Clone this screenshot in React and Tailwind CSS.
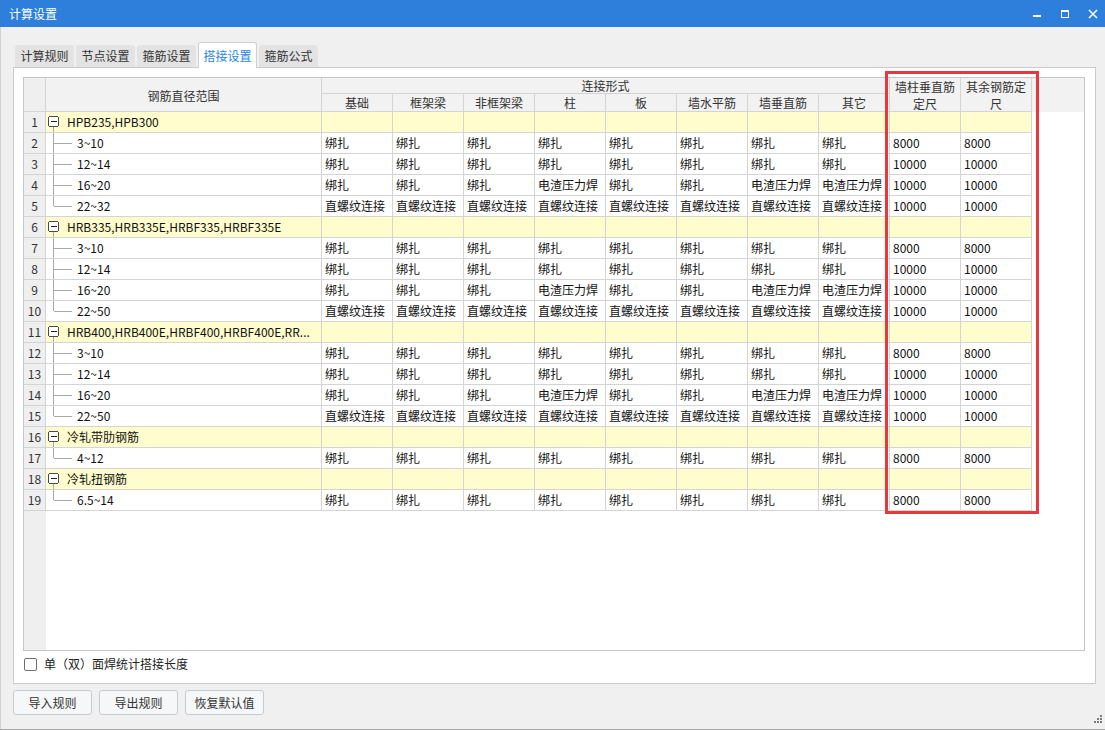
import React from 'react';

const B = '绑扎';
const Z = '直螺纹连接';
const D = '电渣压力焊';

const plain = (len) => [B, B, B, B, B, B, B, B, len, len];
const weld = [B, B, B, D, B, B, D, D, '10000', '10000'];
const screw = [Z, Z, Z, Z, Z, Z, Z, Z, '10000', '10000'];

const rows = [
  { g: 'HPB235,HPB300' },
  { l: '3~10', c: plain('8000') },
  { l: '12~14', c: plain('10000') },
  { l: '16~20', c: weld },
  { l: '22~32', c: screw, last: true },
  { g: 'HRB335,HRB335E,HRBF335,HRBF335E' },
  { l: '3~10', c: plain('8000') },
  { l: '12~14', c: plain('10000') },
  { l: '16~20', c: weld },
  { l: '22~50', c: screw, last: true },
  { g: 'HRB400,HRB400E,HRBF400,HRBF400E,RR...' },
  { l: '3~10', c: plain('8000') },
  { l: '12~14', c: plain('10000') },
  { l: '16~20', c: weld },
  { l: '22~50', c: screw, last: true },
  { g: '冷轧带肋钢筋' },
  { l: '4~12', c: plain('8000'), last: true },
  { g: '冷轧扭钢筋' },
  { l: '6.5~14', c: plain('8000'), last: true },
];

const subCols = ['基础', '框架梁', '非框架梁', '柱', '板', '墙水平筋', '墙垂直筋', '其它'];

const GroupMark = () => (
  <svg width="21" height="21" className="shrink-0 overflow-visible" shapeRendering="crispEdges">
    <line x1="7.5" y1="15" x2="7.5" y2="21" stroke="#a9a9a9" />
    <rect x="2.5" y="4.5" width="10" height="10" rx="2" fill="#fff" stroke="#4a4a4a" />
    <line x1="5" y1="9.5" x2="11" y2="9.5" stroke="#222" />
  </svg>
);

const ChildMark = ({ last }) => (
  <svg width="31" height="21" className="shrink-0 overflow-visible" shapeRendering="crispEdges">
    <line x1="7.5" y1="-1" x2="7.5" y2={last ? 10 : 21} stroke="#a9a9a9" />
    <line x1="7.5" y1="10.5" x2="26" y2="10.5" stroke="#a9a9a9" />
  </svg>
);

function Grid() {
  return (
    <div className="w-[1062px] h-[574px] border border-[#c3c6cb] flex flex-col bg-white">
      {/* header */}
      <div className="flex h-[34px] shrink-0 bg-[#f2f2f2] text-[#333]">
        <div className="w-[22px] border-r border-b border-[#d4d4d4] bg-[#efefef]" />
        <div className="w-[276px] border-r border-b border-[#d4d4d4] flex items-center justify-center pt-[2px]">
          钢筋直径范围
        </div>
        <div className="w-[568px] flex flex-col">
          <div className="h-[16px] border-r border-b border-[#d4d4d4] flex items-center justify-center leading-[15px]">
            连接形式
          </div>
          <div className="flex h-[18px]">
            {subCols.map((c) => (
              <div key={c} className="w-[71px] border-r border-b border-[#d4d4d4] flex items-center justify-center leading-[17px]">
                {c}
              </div>
            ))}
          </div>
        </div>
        <div className="w-[71px] border-r border-b border-[#d4d4d4] text-center leading-[17px]">
          墙柱垂直筋<br />定尺
        </div>
        <div className="w-[71px] border-r border-b border-[#d4d4d4] text-center leading-[17px]">
          其余钢筋定<br />尺
        </div>
        <div className="flex-1" />
      </div>

      {/* rows */}
      {rows.map((r, i) => {
        const group = !!r.g;
        const bg = group ? 'bg-[#fffdcd]' : 'bg-white';
        return (
          <div key={i} className="flex h-[21px] shrink-0 leading-[20px] text-[#111]">
            <div className="w-[22px] border-r border-b border-[#d4d4d4] bg-[#efefef] text-center text-[#333]">
              {i + 1}
            </div>
            <div className={`w-[276px] border-r border-b border-[#d4d4d4] flex items-start overflow-hidden ${bg}`}>
              {group ? <GroupMark /> : <ChildMark last={r.last} />}
              <span className="whitespace-nowrap">{group ? r.g : r.l}</span>
            </div>
            {(group ? Array(10).fill('') : r.c).map((c, j) => (
              <div key={j} className={`w-[71px] border-r border-b border-[#d4d4d4] px-[3px] whitespace-nowrap overflow-hidden ${bg}`}>
                {c}
              </div>
            ))}
            <div className="flex-1" />
          </div>
        );
      })}

      <div className="flex-1 flex">
        <div className="w-[22px] bg-[#efefef]" />
        <div className="flex-1" />
      </div>
    </div>
  );
}

const tabs = ['计算规则', '节点设置', '箍筋设置', '搭接设置', '箍筋公式'];

export default function App() {
  return (
    <div className="relative w-[1105px] h-[730px] overflow-hidden flex flex-col bg-[#f0f0f0] text-[12px] font-['Noto_Sans_CJK_SC','Microsoft_YaHei',sans-serif]">
      {/* title bar */}
      <div className="h-[27px] shrink-0 bg-[#2d7fdb] flex items-center pl-[9px] text-white text-[12px]">
        <span className="flex-1">计算设置</span>
        <svg width="80" height="27" className="shrink-0" shapeRendering="crispEdges">
          <rect x="8" y="15" width="8" height="2" fill="#fff" />
          <rect x="36.5" y="10.5" width="7" height="7" fill="none" stroke="#fff" />
          <rect x="36" y="10" width="8" height="2" fill="#fff" />
          <path d="M64 10 L72 18 M72 10 L64 18" stroke="#fff" strokeWidth="1.5" shapeRendering="auto" />
        </svg>
      </div>

      {/* body */}
      <div className="flex-1 flex flex-col pl-[12px] pt-[15px] border-l border-[#d0d0d0]">
        <div className="flex items-end h-[25px] pl-[2px] gap-[2px]">
          {tabs.map((t) =>
            t === '搭接设置' ? (
              <div key={t} className="relative z-10 -mb-px w-[59px] h-[26px] bg-white border border-b-0 border-[#cfcfcf] rounded-t-[3px] flex items-center justify-center text-[#2584e4]">
                {t}
              </div>
            ) : (
              <div key={t} className="w-[59px] h-[22px] bg-[#e3e3e3] rounded-t-[3px] flex items-center justify-center text-[#333]">
                {t}
              </div>
            )
          )}
        </div>

        <div className="w-[1083px] h-[617px] bg-white border border-[#cbcbcb] pl-[9px] pt-[9px] flex flex-col">
          <Grid />
          <div className="flex items-center mt-[6px] h-[14px]">
            <div className="w-[13px] h-[13px] ml-px border border-[#707070] rounded-[2px] bg-white" />
            <span className="ml-[7px] text-[#222] leading-[14px]">单（双）面焊统计搭接长度</span>
          </div>
        </div>

        <div className="flex gap-[7px] mt-[6px]">
          {['导入规则', '导出规则', '恢复默认值'].map((b) => (
            <div key={b} className="w-[79px] h-[25px] border border-[#c6cad2] rounded-[3px] bg-[#f6f7f9] flex items-center justify-center text-[#333]">
              {b}
            </div>
          ))}
        </div>

        <div className="flex-1 flex justify-end items-end pr-[2px] pb-[5px]">
          <svg width="9" height="9" shapeRendering="crispEdges">
            <rect x="6" y="0" width="2" height="2" fill="#7a7a7a" />
            <rect x="3" y="3" width="2" height="2" fill="#7a7a7a" />
            <rect x="6" y="3" width="2" height="2" fill="#7a7a7a" />
            <rect x="0" y="6" width="2" height="2" fill="#7a7a7a" />
            <rect x="3" y="6" width="2" height="2" fill="#7a7a7a" />
            <rect x="6" y="6" width="2" height="2" fill="#7a7a7a" />
          </svg>
        </div>
      </div>
      <div className="h-[3px] shrink-0 border-t border-[#a8a8a8] bg-[#e6e6e6]" />

      {/* annotation box */}
      <div className="absolute left-[885px] top-[71px] w-[154px] h-[443px] border-[3px] border-[#e8383d] pointer-events-none" />
    </div>
  );
}
